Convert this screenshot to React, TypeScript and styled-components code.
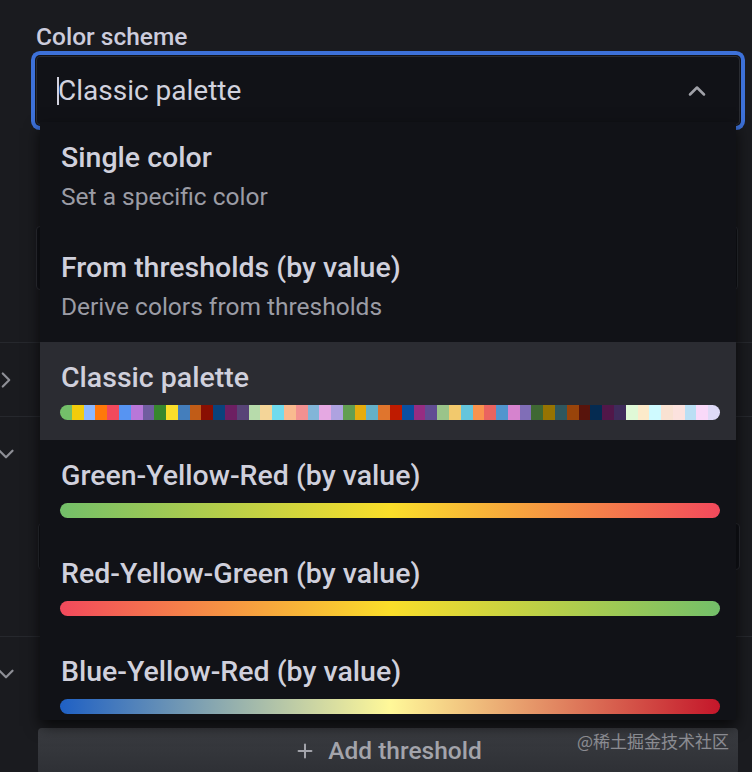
import React from 'react';
import styled, { createGlobalStyle } from 'styled-components';
import { ChevronDown, ChevronRight, ChevronUp, Plus } from 'lucide-react';

const GlobalStyle = createGlobalStyle`
  html, body { margin: 0; padding: 0; background: #1a1b1f; }
  #root { width: 752px; height: 772px; }
`;

const classicColors = [
  '#73BF69', '#F2CC0C', '#8AB8FF', '#FF780A', '#F2495C', '#5794F2', '#B877D9', '#705DA0',
  '#37872D', '#FADE2A', '#447EBC', '#C15C17', '#890F02', '#0A437C', '#6D1F62', '#584477',
  '#B7DBAB', '#F4D598', '#70DBED', '#F9BA8F', '#F29191', '#82B5D8', '#E5A8E2', '#AEA2E0',
  '#629E51', '#E5AC0E', '#64B0C8', '#E0752D', '#BF1B00', '#0A50A1', '#962D82', '#614D93',
  '#9AC48A', '#F2C96D', '#65C5DB', '#F9934E', '#EA6460', '#5195CE', '#D683CE', '#806EB7',
  '#3F6833', '#967302', '#2F575E', '#99440A', '#58140C', '#052B51', '#511749', '#3F2B5B',
  '#E0F9D7', '#FCEACA', '#CFFAFF', '#F9E2D2', '#FCE2DE', '#BADFF4', '#F9D9F9', '#DEDAF7',
];

const hardStops = (colors: string[]) =>
  `linear-gradient(90deg, ${colors
    .map((c, i) => `${c} ${((i / colors.length) * 100).toFixed(3)}% ${(((i + 1) / colors.length) * 100).toFixed(3)}%`)
    .join(', ')})`;

const Page = styled.div`
  position: relative;
  width: 752px;
  height: 772px;
  overflow: hidden;
  background: #1a1b1f;
  color: #ccccdc;
  font-family: Roboto, "Liberation Sans", sans-serif;
`;

const TopBlock = styled.div`
  height: 342px;
  box-sizing: border-box;
  padding: 23px 12px 0 36px;
`;

const Label = styled.div`
  font-size: 24.5px;
  font-weight: 500;
  line-height: 28px;
  color: #ccccdc;
  margin-bottom: 5px;
  white-space: nowrap;
`;

const GhostInput = styled.div<{ $h: number; $mt: number }>`
  height: ${(p) => p.$h}px;
  margin-top: ${(p) => p.$mt}px;
  box-sizing: border-box;
  border: 1px solid #2c2e34;
  border-radius: 4px;
  background: #111217;
  width: 702px;
`;

const SelectWrap = styled.div`
  position: relative;
  width: 704px;
`;

const SelectBox = styled.div`
  display: flex;
  align-items: center;
  height: 69px;
  box-sizing: border-box;
  padding: 0 28px 0 20px;
  background: #111217;
  border: 1px solid #2a2c32;
  border-radius: 4px;
  box-shadow: 0 0 0 1px #111217, 0 0 0 5px #3d71d9;
`;

const SelectValue = styled.div`
  flex: 1;
  display: flex;
  align-items: center;
  font-size: 28px;
  line-height: 32px;
  color: #d2d2de;
`;

const Caret = styled.span`
  display: inline-block;
  width: 2px;
  height: 28px;
  background: #d2d2de;
  margin-right: -1px;
`;

const Menu = styled.div`
  position: absolute;
  top: 66px;
  left: 4px;
  width: 696px;
  height: 598px;
  overflow: hidden;
  background: #111217;
  box-shadow: 0 6px 14px rgba(0, 0, 0, 0.7);
  z-index: 2;
`;

const Option = styled.div<{ $active?: boolean }>`
  padding: 20px 16px 20px 20px;
  background: ${(p) => (p.$active ? '#2b2c32' : 'transparent')};
`;

const OptionTitle = styled.div`
  font-size: 28.5px;
  font-weight: 500;
  line-height: 32px;
  color: #d0d0dc;
  padding-left: 1px;
  white-space: nowrap;
`;

const OptionDesc = styled.div`
  margin-top: 9px;
  margin-bottom: 1px;
  font-size: 24.5px;
  line-height: 28px;
  color: #9b9ca5;
  padding-left: 1px;
  white-space: nowrap;
`;

const Bar = styled.div`
  margin-top: 11px;
  height: 15px;
  border-radius: 8px;
`;

const Section = styled.div`
  border-top: 1px solid #26282d;
`;

const SectionHeader = styled.div`
  height: 73px;
  display: flex;
  align-items: center;
  color: #8e8f96;
  & > svg {
    margin-left: -7px;
  }
`;

const SectionBody = styled.div<{ $h: number; $pt: number }>`
  height: ${(p) => p.$h}px;
  padding: ${(p) => p.$pt}px 0 0 38px;
  box-sizing: border-box;
`;

const AddButton = styled.div`
  width: 700px;
  height: 46px;
  display: flex;
  align-items: center;
  justify-content: center;
  gap: 12px;
  border-radius: 4px;
  background: linear-gradient(180deg, #3a3c41 0%, #2e3035 100%);
  color: #a3a4ab;
  font-size: 24.5px;
  font-weight: 500;
  line-height: 28px;
`;

const Watermark = styled.div`
  position: absolute;
  right: 23px;
  bottom: 21px;
  font-family: "Noto Sans CJK SC", "Noto Sans", sans-serif;
  font-size: 17px;
  line-height: 20px;
  color: rgba(225, 225, 232, 0.5);
  z-index: 3;
  white-space: nowrap;
`;

type Scheme = { title: string; desc?: string; bar?: string; active?: boolean };

const schemes: Scheme[] = [
  { title: 'Single color', desc: 'Set a specific color' },
  { title: 'From thresholds (by value)', desc: 'Derive colors from thresholds' },
  { title: 'Classic palette', bar: hardStops(classicColors), active: true },
  { title: 'Green-Yellow-Red (by value)', bar: 'linear-gradient(90deg, #73BF69, #FADE2A, #F2495C)' },
  { title: 'Red-Yellow-Green (by value)', bar: 'linear-gradient(90deg, #F2495C, #FADE2A, #73BF69)' },
  { title: 'Blue-Yellow-Red (by value)', bar: 'linear-gradient(90deg, #1F60C4, #FFF899, #C4162A)' },
];

export default function App() {
  return (
    <>
      <GlobalStyle />
      <Page>
        <TopBlock>
          <Label>Color scheme</Label>
          <SelectWrap>
            <SelectBox>
              <SelectValue>
                <Caret />
                Classic palette
              </SelectValue>
              <ChevronUp size={28} strokeWidth={2.2} color="#a0a1a8" />
            </SelectBox>
            <Menu>
              {schemes.map((s) => (
                <Option key={s.title} $active={s.active}>
                  <OptionTitle>{s.title}</OptionTitle>
                  {s.desc && <OptionDesc>{s.desc}</OptionDesc>}
                  {s.bar && <Bar style={{ background: s.bar }} />}
                </Option>
              ))}
            </Menu>
          </SelectWrap>
          <GhostInput $h={64} $mt={101} />
        </TopBlock>
        <Section>
          <SectionHeader>
            <ChevronRight size={26} strokeWidth={2} />
          </SectionHeader>
        </Section>
        <Section>
          <SectionHeader>
            <ChevronDown size={26} strokeWidth={2} />
          </SectionHeader>
          <SectionBody $h={146} $pt={33}>
            <GhostInput $h={47} $mt={0} />
          </SectionBody>
        </Section>
        <Section>
          <SectionHeader>
            <ChevronDown size={26} strokeWidth={2} />
          </SectionHeader>
          <SectionBody $h={120} $pt={18}>
            <AddButton>
              <Plus size={22} strokeWidth={2.2} />
              Add threshold
            </AddButton>
          </SectionBody>
        </Section>
        <Watermark>@稀土掘金技术社区</Watermark>
      </Page>
    </>
  );
}
